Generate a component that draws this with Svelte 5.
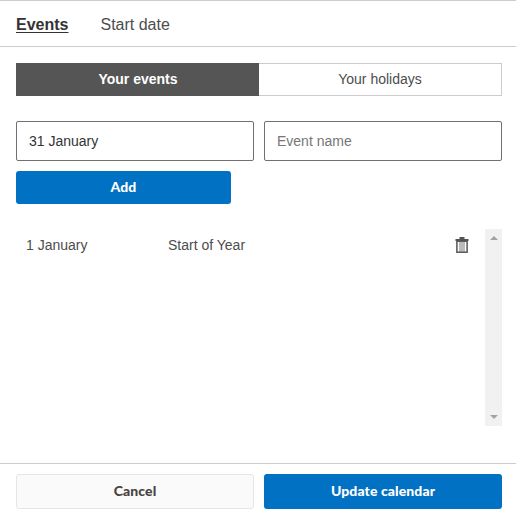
<script>
  let dateValue = $state('31 January');
  let eventName = $state('');
  const events = [{ date: '1 January', name: 'Start of Year' }];
</script>

<div class="dialog">
  <nav class="tabs">
    <span class="tab active">Events</span>
    <span class="tab">Start date</span>
  </nav>

  <main class="body">
    <div class="segments">
      <div class="segment on">Your events</div>
      <div class="segment">Your holidays</div>
    </div>

    <div class="fields">
      <input class="field" bind:value={dateValue} />
      <input class="field" placeholder="Event name" bind:value={eventName} />
    </div>

    <div class="add-row">
      <button class="btn primary add">Add</button>
    </div>

    <div class="list">
      <div class="rows">
        {#each events as ev}
          <div class="row">
            <span class="date">{ev.date}</span>
            <span class="name">{ev.name}</span>
            <svg class="trash" width="14" height="16" viewBox="0 0 14 16" aria-hidden="true">
              <path d="M4.5 1h5M0.5 3h13" fill="none" stroke="#555" stroke-width="1.8" />
              <rect x="1.9" y="4.2" width="10.2" height="11" fill="none" stroke="#555" stroke-width="1.5" />
              <path d="M5 5v10M7 5v10M9 5v10" fill="none" stroke="#777" stroke-width="1" />
            </svg>
          </div>
        {/each}
      </div>
      <div class="scrollbar">
        <span class="arrow up"></span>
        <span class="arrow down"></span>
      </div>
    </div>
  </main>

  <footer class="footer">
    <button class="btn cancel">Cancel</button>
    <button class="btn primary">Update calendar</button>
  </footer>
</div>

<style>
  :global(body) {
    margin: 0;
    background: #fff;
  }
  .dialog {
    width: 516px;
    height: 517px;
    box-sizing: border-box;
    border-top: 1px solid #ccc;
    font-family: "Liberation Sans", Arial, sans-serif;
    color: #4a4a4a;
    display: flex;
    flex-direction: column;
    background: #fff;
  }
  .tabs {
    height: 45px;
    box-sizing: content-box;
    border-bottom: 1px solid #ccc;
    display: flex;
    align-items: center;
    gap: 32px;
    padding: 0 16px;
    font-size: 16px;
    flex: none;
  }
  .tab {
    position: relative;
    top: 1px;
    color: #4d4d4d;
  }
  .tab.active {
    font-weight: 700;
    color: #333;
    text-decoration: underline;
    text-underline-offset: 2px;
  }
  .body {
    flex: 1;
    padding: 16px 14px 0 16px;
    display: flex;
    flex-direction: column;
    min-height: 0;
  }
  .segments {
    display: grid;
    grid-template-columns: 243px 243px;
    height: 33px;
    font-size: 14px;
  }
  .segment {
    display: flex;
    align-items: center;
    justify-content: center;
    border: 1px solid #ccc;
    border-left: 0;
    padding-bottom: 2px;
    box-sizing: border-box;
    color: #4d4d4d;
  }
  .segment.on {
    background: #555;
    border-color: #555;
    color: #fff;
    font-weight: 700;
    padding-left: 2px;
  }
  .fields {
    display: grid;
    grid-template-columns: 238px 238px;
    gap: 10px;
    margin-top: 25px;
  }
  .field {
    height: 40px;
    box-sizing: border-box;
    border: 1px solid #707070;
    border-radius: 2px;
    padding: 0 12px;
    font: 14px "Liberation Sans", Arial, sans-serif;
    color: #333;
    outline: none;
    background: #fff;
    width: 100%;
  }
  .field::placeholder {
    color: #767676;
    opacity: 1;
  }
  .add-row {
    margin-top: 10px;
  }
  .btn {
    font-family: Lato, "Liberation Sans", sans-serif;
    font-weight: 900;
    font-size: 14px;
    letter-spacing: 0.1px;
    border-radius: 3px;
    border: 0;
    padding: 0 0 2px;
    cursor: pointer;
  }
  .primary {
    background: #0071c3;
    color: #fff;
  }
  .add {
    width: 215px;
    height: 33px;
    display: block;
  }
  .list {
    margin-top: 25px;
    height: 197px;
    display: flex;
  }
  .rows {
    flex: 1;
    padding-right: 16px;
  }
  .row {
    height: 32px;
    display: flex;
    align-items: center;
    font-size: 14px;
    color: #4d4d4d;
    padding-left: 10px;
  }
  .date {
    width: 142px;
  }
  .name {
    flex: 1;
  }
  .trash {
    flex: none;
  }
  .scrollbar {
    width: 17px;
    background: #f1f1f1;
    display: flex;
    flex-direction: column;
    justify-content: space-between;
    align-items: center;
    padding: 7px 0;
    box-sizing: border-box;
  }
  .arrow {
    width: 0;
    height: 0;
    border-left: 4px solid transparent;
    border-right: 4px solid transparent;
  }
  .arrow.up {
    border-bottom: 4px solid #a3a3a3;
  }
  .arrow.down {
    border-top: 4px solid #a3a3a3;
  }
  .footer {
    flex: none;
    height: 43px;
    border-top: 1px solid #ccc;
    padding: 10px 14px 0 16px;
    display: grid;
    grid-template-columns: 238px 238px;
    gap: 10px;
    box-sizing: content-box;
  }
  .footer .btn {
    height: 35px;
  }
  .cancel {
    background: #fafafa;
    border: 1px solid #e6e6e6;
    color: #4a4340;
  }
</style>
